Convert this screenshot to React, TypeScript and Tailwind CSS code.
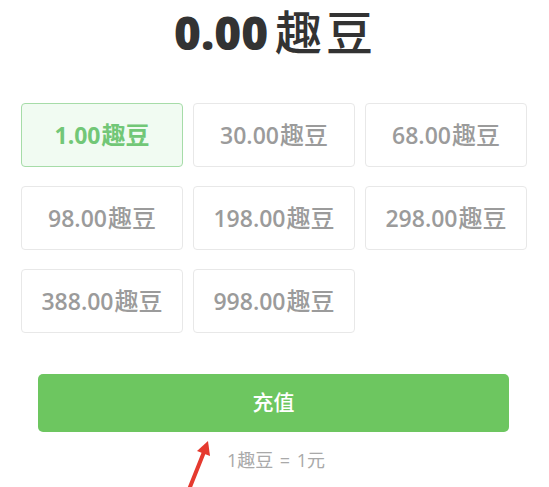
import React from "react"

const amounts = ["1.00", "30.00", "68.00", "98.00", "198.00", "298.00", "388.00", "998.00"]

const font = { fontFamily: '"Open Sans", "Noto Sans CJK SC", sans-serif' }

export default function App() {
  const selected = 0

  return (
    <div className="relative w-[549px] h-[487px] overflow-hidden bg-white" style={font}>
      <div className="h-[103px] pt-[4px] flex justify-center">
        <h1 className="text-[46px] leading-[56px] font-extrabold text-[#333333] pl-[2px]">
          0.00<span className="ml-[7px] text-[47px] font-medium tracking-[4px]">趣豆</span>
        </h1>
      </div>

      <div className="grid grid-cols-3 gap-x-[10px] gap-y-[19px] pl-[21px] pr-[22px]">
        {amounts.map((a, i) => (
          <div
            key={a}
            className={`h-[64px] rounded-[4px] border flex items-center justify-center text-[23px] ${
              i === selected
                ? "bg-[#f1fbf2] border-[#a6dca8] text-[#72c777] font-bold"
                : "bg-white border-[#e8e8e8] text-[#9b9b9b] font-semibold"
            }`}
          >
            {a}
            <span className={`ml-[1px] text-[24px] ${i === selected ? "font-bold" : "font-medium"}`}>趣豆</span>
          </div>
        ))}
      </div>

      <div className="mt-[41px] px-[38px] pr-[40px]">
        <button className="w-full h-[58px] rounded-[5px] bg-[#6dc660] text-white text-[21px] font-medium">
          充值
        </button>
      </div>

      <p className="mt-[17px] text-center text-[18px] leading-[22px] text-[#a9a9a9] pl-[3px] [word-spacing:2px]">
        1趣豆 = 1元
      </p>

      <svg className="absolute left-0 top-0" width="549" height="487" viewBox="0 0 549 487">
        <line x1="188" y1="492" x2="204" y2="452" stroke="#e53a2f" strokeWidth="4" strokeLinecap="round" />
        <polygon points="208,441 210,456 197,451" fill="#e53a2f" />
      </svg>
    </div>
  )
}
